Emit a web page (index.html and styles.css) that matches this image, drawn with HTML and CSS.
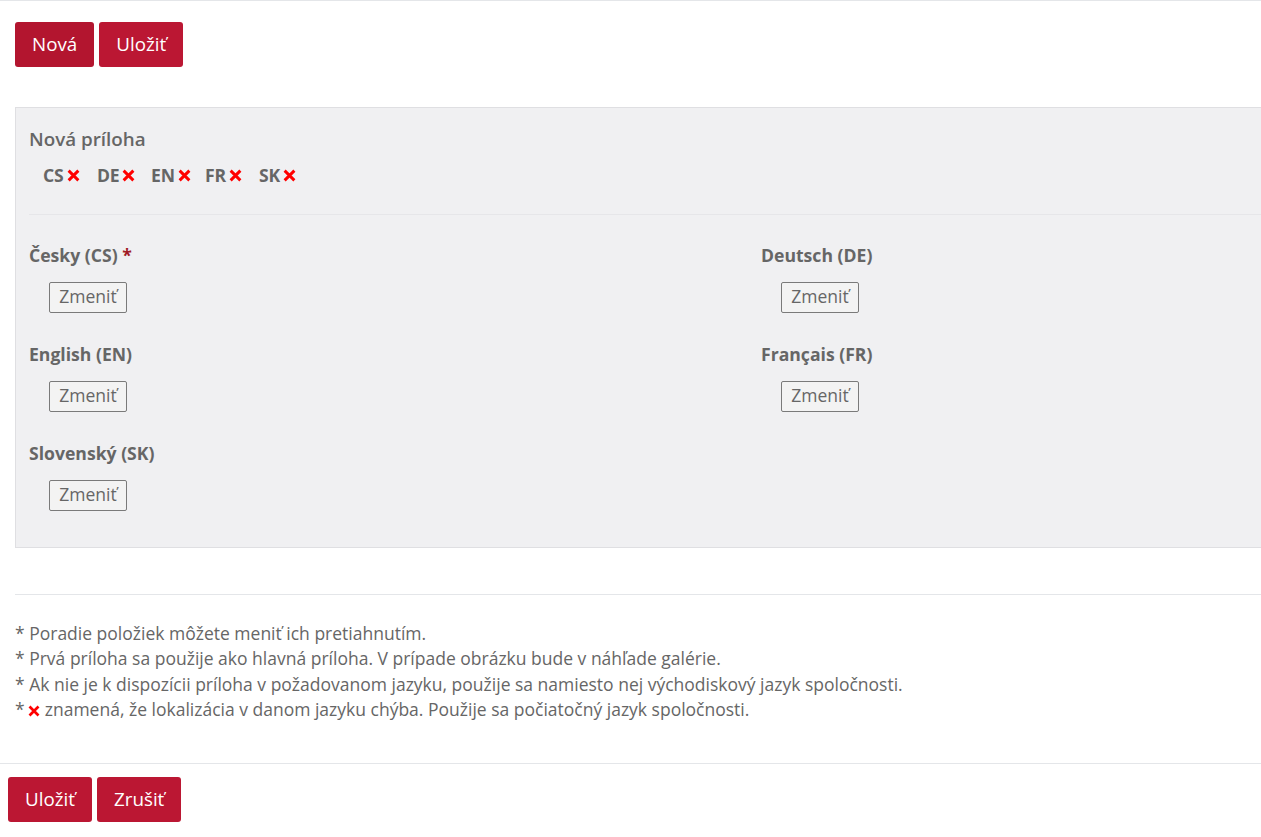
FILE: index.html
```html
<!DOCTYPE html>
<html lang="sk">
<head>
<meta charset="utf-8">
<title>Prílohy</title>
<link rel="stylesheet" href="styles.css">
</head>
<body>
<div class="topline"></div>
<div class="content">
  <div class="toolbar">
    <button class="btn btn-primary btn-active">Nová</button>
    <button class="btn btn-primary">Uložiť</button>
  </div>

  <div class="panel">
    <div class="panel-title">Nová príloha</div>
    <div class="tags">
      <span class="tag">CS<svg class="x" viewBox="0 0 12 12"><path d="M1.5 1.5 L10.5 10.5 M10.5 1.5 L1.5 10.5"/></svg></span>
      <span class="tag">DE<svg class="x" viewBox="0 0 12 12"><path d="M1.5 1.5 L10.5 10.5 M10.5 1.5 L1.5 10.5"/></svg></span>
      <span class="tag">EN<svg class="x" viewBox="0 0 12 12"><path d="M1.5 1.5 L10.5 10.5 M10.5 1.5 L1.5 10.5"/></svg></span>
      <span class="tag">FR<svg class="x" viewBox="0 0 12 12"><path d="M1.5 1.5 L10.5 10.5 M10.5 1.5 L1.5 10.5"/></svg></span>
      <span class="tag">SK<svg class="x" viewBox="0 0 12 12"><path d="M1.5 1.5 L10.5 10.5 M10.5 1.5 L1.5 10.5"/></svg></span>
    </div>
    <div class="sep"></div>
    <div class="fields">
      <div class="field">
        <div class="field-label">Česky (CS) <span class="req">*</span></div>
        <button class="btn-change">Zmeniť</button>
      </div>
      <div class="field">
        <div class="field-label">Deutsch (DE)</div>
        <button class="btn-change">Zmeniť</button>
      </div>
      <div class="field">
        <div class="field-label">English (EN)</div>
        <button class="btn-change">Zmeniť</button>
      </div>
      <div class="field">
        <div class="field-label">Français (FR)</div>
        <button class="btn-change">Zmeniť</button>
      </div>
      <div class="field">
        <div class="field-label">Slovenský (SK)</div>
        <button class="btn-change">Zmeniť</button>
      </div>
    </div>
  </div>

  <div class="hr"></div>

  <div class="notes">
    <div>* Poradie položiek môžete meniť ich pretiahnutím.</div>
    <div>* Prvá príloha sa použije ako hlavná príloha. V prípade obrázku bude v náhľade galérie.</div>
    <div>* Ak nie je k dispozícii príloha v požadovanom jazyku, použije sa namiesto nej východiskový jazyk spoločnosti.</div>
    <div>* <svg class="x x-note" viewBox="0 0 12 12"><path d="M1.5 1.5 L10.5 10.5 M10.5 1.5 L1.5 10.5"/></svg> znamená, že lokalizácia v danom jazyku chýba. Použije sa počiatočný jazyk spoločnosti.</div>
  </div>
</div>

<div class="footer">
  <button class="btn btn-primary">Uložiť</button>
  <button class="btn btn-primary">Zrušiť</button>
</div>
</body>
</html>
```

FILE: styles.css
```css
html {
  overflow-x: hidden;
}
body {
  margin: 0;
  font-family: "Open Sans", "Liberation Sans", sans-serif;
  color: #666;
  background: #fff;
}
.topline {
  border-top: 1px solid #e4e6e9;
}
.content {
  padding-left: 15px;
}
.toolbar {
  display: flex;
  gap: 5px;
  margin-top: 21px;
}
.btn {
  font-family: "Open Sans", "Liberation Sans", sans-serif;
  font-size: 18.8px;
  line-height: 27px;
  border: none;
  border-radius: 3px;
  padding: 9px 17px;
  cursor: pointer;
}
.btn-primary {
  background: #bb1733;
  color: #fff;
}
.btn-active {
  background: #b3152f;
}
.panel {
  margin-top: 40px;
  background: #f0f0f2;
  border: 1px solid #dfdfe2;
  border-right: none;
  padding: 18px 0 36px 13px;
}
.panel-title {
  font-size: 18.8px;
  line-height: 27px;
  font-weight: 600;
  color: #666;
}
.tags {
  display: flex;
  margin-top: 10px;
  padding-left: 14px;
}
.tag {
  width: 54px;
  display: inline-flex;
  align-items: center;
  font-size: 17.6px;
  line-height: 24px;
  font-weight: 700;
  color: #666;
  letter-spacing: -0.2px;
}
.x {
  width: 13px;
  height: 13px;
  margin-left: 3px;
  fill: none;
  stroke: #ff0000;
  stroke-width: 2.7;
  stroke-linecap: butt;
}
.sep {
  margin-top: 27px;
  border-top: 1px solid #e6e6e9;
}
.fields {
  display: grid;
  grid-template-columns: 732px 1fr;
  row-gap: 29px;
  margin-top: 28px;
}
.field-label {
  font-size: 17.6px;
  line-height: 24px;
  font-weight: 700;
  color: #666;
  margin-bottom: 15px;
}
.req {
  color: #a01c27;
}
.btn-change {
  margin-left: 20px;
  font-family: "Open Sans", "Liberation Sans", sans-serif;
  font-size: 17.5px;
  line-height: 23px;
  color: #666;
  background: #f3f3f3;
  border: 1px solid #7a7a7a;
  border-radius: 2px;
  padding: 2px 0 4px;
  height: 31px;
  width: 78px;
}
.hr {
  margin-top: 46px;
  border-top: 1px solid #e4e6e9;
}
.notes {
  margin-top: 26px;
  font-size: 17.5px;
  line-height: 25.4px;
  color: #666;
}
.x-note {
  width: 12px;
  height: 12px;
  margin: 0 0 0 -1px;
  vertical-align: -1px;
}
.footer {
  margin-top: 40px;
  border-top: 1px solid #e4e6e9;
  padding: 13px 8px;
  display: flex;
  gap: 5px;
}
```
